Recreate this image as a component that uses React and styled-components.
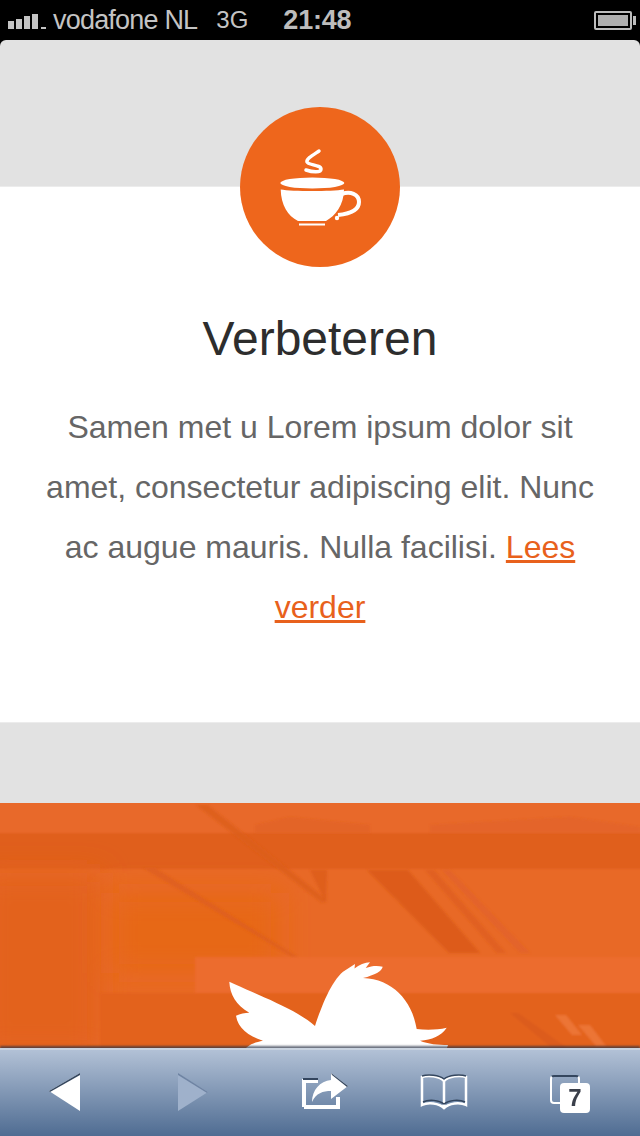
import React from "react";
import styled, { createGlobalStyle } from "styled-components";

const GlobalStyle = createGlobalStyle`
  html, body {
    margin: 0;
    padding: 0;
    background: #000;
  }
  body {
    font-family: "Liberation Sans", Arial, sans-serif;
  }
`;

function App() {
  return (
    <Phone>
      <GlobalStyle />
      <StatusBar>
        <SignalBars>
          {[8, 10, 13, 15].map((h) => (
            <Bar key={h} $height={h} />
          ))}
          <Dash />
        </SignalBars>
        <Carrier>vodafone NL</Carrier>
        <Network>3G</Network>
        <Clock>21:48</Clock>
        <Battery>
          <BatteryLevel />
        </Battery>
      </StatusBar>

      <Page>
        <TopBand />
        <Card>
          <Badge>
            <CupIcon />
          </Badge>
          <Title>Verbeteren</Title>
          <Text>
            Samen met u Lorem ipsum dolor sit amet, consectetur adipiscing
            elit. Nunc ac augue mauris. Nulla facilisi.{" "}
            <ReadMore href="#">Lees verder</ReadMore>
          </Text>
        </Card>
        <Spacer />
        <Banner>
          <BannerPhoto />
          <BirdIcon />
        </Banner>
      </Page>

      <Toolbar>
        <Tool $width={31} $left={0}>
          <svg width="31" height="38" viewBox="0 0 31 38">
            <path d="M31 0 L0 18 L31 38 Z" fill="#fff" />
            <path d="M31 0 L0 18 L1 19 L31 2 Z" fill="#34465e" />
          </svg>
        </Tool>
        <Tool $width={30} $left={98}>
          <svg width="30" height="38" viewBox="0 0 30 38">
            <path d="M0 0 L30 19 L0 38 Z" fill="#9fb1cb" />
            <path d="M0 0 L30 19 L29 20 L0 2 Z" fill="#6f84a3" />
          </svg>
        </Tool>
        <Tool $width={46} $left={94}>
          <ShareIcon />
        </Tool>
        <Tool $width={48} $left={72}>
          <BookIcon />
        </Tool>
        <Tool $width={40} $left={82}>
          <TabsBack />
          <TabsCount>7</TabsCount>
        </Tool>
      </Toolbar>
    </Phone>
  );
}

function CupIcon() {
  return (
    <svg width="84" height="80" viewBox="0 0 84 80">
      <g transform="translate(-278 -147)">
        <path
          d="M319 151 C313 155 306 159 307 162 C308 165 321 165 321 169 C321 173 312 172 306 170"
          fill="none"
          stroke="#fff"
          strokeWidth="3.5"
          strokeLinecap="round"
        />
        <ellipse cx="312.3" cy="183" rx="32" ry="5.5" fill="#fff" />
        <path
          d="M280.7 189.5 C292 191.5 332 191.5 344 189.5 C344 205 335 216 326 221 L298 221 C288 216 281 205 280.7 189.5 Z"
          fill="#fff"
        />
        <path
          d="M342 194 C350 191 359 194 359 202 C359 211 348 214 338 215"
          fill="none"
          stroke="#fff"
          strokeWidth="4"
        />
        <circle cx="337" cy="218" r="2.2" fill="#fff" />
        <rect x="299" y="223.5" width="26" height="2" fill="#fff" />
      </g>
    </svg>
  );
}

function BirdIcon() {
  return (
    <BirdSvg width="224" height="88" viewBox="227 960 224 88">
      <path
        fill="#fff"
        d="M229.3 981.7 C258 995 298 1010 315 1026 C322 1005 331 982 343 971.7 L355 964 L354.5 968.5 C359 965 365 962.5 370 962.3 L365.7 968 C372 965.5 378 965.5 382.7 966.7 C382 971 375 975 363 978 C392 979 412 1000 416.7 1029 C426 1030 437 1030 446.7 1027.7 C441 1036 432 1040 420 1040.7 C428 1044 438 1045 448 1045 L447 1048 L246 1048 C250 1044 256 1042 263 1040.7 C248 1036 238 1028 236 1015.7 C240 1013.5 245 1013 249.3 1012.7 C236 1005 230 995 229.3 981.7 Z"
      />
    </BirdSvg>
  );
}

function BannerPhoto() {
  return (
    <PhotoSvg viewBox="0 0 640 245" preserveAspectRatio="none">
      <defs>
        <filter id="soft" x="-5%" y="-5%" width="110%" height="110%">
          <feGaussianBlur stdDeviation="1.2" />
        </filter>
        <filter id="softer" x="-60%" y="-60%" width="220%" height="220%">
          <feGaussianBlur stdDeviation="14" />
        </filter>
      </defs>
      {/* big soft colour areas of the faded photo */}
      <g filter="url(#soft)">
        <rect x="-5" y="-5" width="650" height="35" fill="#e8692a" />
        <rect x="-5" y="30" width="650" height="36" fill="#e05f1d" />
        <rect x="-5" y="66" width="650" height="190" fill="#e86928" />
      </g>
      <rect x="-20" y="70" width="120" height="180" fill="#e3621a" filter="url(#softer)" />
      <rect x="110" y="90" width="170" height="80" fill="#e76714" filter="url(#softer)" />
      <g filter="url(#soft)">
        <rect x="195" y="154" width="450" height="36" fill="#ec6c2e" />
        <rect x="100" y="190" width="545" height="60" fill="#e3621f" />
        {/* roof beams */}
        <path d="M196 2 L208 2 L327 97 L322 100 Z" fill="#dc5e1d" opacity="0.8" />
        <path d="M310 67 L327 67 L326 100 Z" fill="#dc5d1b" opacity="0.8" />
        <path d="M143 65 L155 65 L298 154 L292 154 Z" fill="#dd5f1e" opacity="0.8" />
        {/* dark window frame with stripes */}
        <path d="M367 67 L408 67 L480 150 L449 150 Z" fill="#da5a18" opacity="0.85" />
        <path d="M425 67 L434 67 L506 150 L497 150 Z" fill="#de5f20" opacity="0.8" />
        <path d="M442 67 L450 67 L530 150 L520 150 Z" fill="#e2632a" opacity="0.8" />
        {/* clutter in the top band */}
        <path d="M255 22 L290 14 L370 22 L370 30 L255 30 Z" fill="#dd5e20" opacity="0.45" />
        <path d="M430 22 L570 14 L640 24 L640 30 L430 30 Z" fill="#e0602a" opacity="0.5" />
        {/* bottom right stripes */}
        <path d="M510 210 L518 210 L567 245 L552 245 Z" fill="#d95b1e" opacity="0.8" />
        <path d="M555 212 L566 212 L582 232 L572 232 Z" fill="#ee7a3c" opacity="0.8" />
        <path d="M578 222 L590 222 L606 243 L596 243 Z" fill="#ee7a3c" opacity="0.8" />
      </g>
    </PhotoSvg>
  );
}

function ShareIcon() {
  return (
    <svg width="46" height="38" viewBox="0 0 46 38">
      <path
        d="M2 34 V8 H16 M36 24 V34 H2"
        fill="none"
        stroke="#fff"
        strokeWidth="4"
      />
      <path d="M1 6 H16" stroke="#33455e" strokeWidth="2" />
      <path
        d="M29 0 L46 13 L29 26 V18 C21 18 14 20 10 29 C10 17 18 8 29 7 Z"
        fill="#fff"
      />
      <path d="M29 0 L46 13 L45 14 L30 2 Z" fill="#34465e" />
    </svg>
  );
}

function BookIcon() {
  return (
    <svg width="48" height="36" viewBox="0 0 48 36">
      <path
        d="M24 7 C19 2 8 1 2 3 V31 C8 28 19 29 24 34 C29 29 40 28 46 31 V3 C40 1 29 2 24 7 Z M24 7 V33"
        fill="none"
        stroke="#fff"
        strokeWidth="2.5"
      />
      <path
        d="M3 28 C9 25 19 26 24 30 C29 26 39 25 45 28 M2 2 C8 0 19 1 24 5 C29 1 40 0 46 2"
        fill="none"
        stroke="#34465e"
        strokeWidth="1.5"
      />
    </svg>
  );
}

const Phone = styled.div`
  width: 640px;
  height: 1136px;
  display: flex;
  flex-direction: column;
  overflow: hidden;
  background: #000;
`;

const StatusBar = styled.div`
  height: 40px;
  flex: none;
  display: flex;
  align-items: center;
  padding: 0 5px 0 8px;
  box-sizing: border-box;
  color: #c4c4c4;
`;

const SignalBars = styled.div`
  display: flex;
  align-items: flex-end;
  gap: 2px;
  width: 38px;
  height: 15px;
  margin-top: 2px;
  flex: none;
`;

const Bar = styled.span`
  width: 6px;
  flex: none;
  height: ${(p) => p.$height}px;
  background: #c4c4c4;
`;

const Dash = styled.span`
  width: 5px;
  flex: none;
  height: 2px;
  margin-left: 1px;
  background: #c4c4c4;
`;

const Carrier = styled.span`
  margin-left: 7px;
  font-size: 27px;
  letter-spacing: -0.8px;
`;

const Network = styled.span`
  margin-left: 19px;
  font-size: 24px;
`;

const Clock = styled.span`
  margin-left: 35px;
  font-size: 27px;
  font-weight: 700;
  color: #bdbdbd;
  letter-spacing: -0.2px;
`;

const Battery = styled.div`
  margin-left: auto;
  margin-right: 3px;
  box-sizing: border-box;
  width: 38px;
  height: 19px;
  padding: 2px;
  border: 2px solid #bdbdbd;
  border-radius: 2px;
  position: relative;
  &::after {
    content: "";
    position: absolute;
    right: -6px;
    top: 3px;
    width: 3px;
    height: 9px;
    background: #bdbdbd;
  }
`;

const BatteryLevel = styled.div`
  height: 100%;
  background: #b0b0b0;
`;

const Page = styled.main`
  flex: none;
  height: 1008px;
  display: flex;
  flex-direction: column;
  background: #e2e2e2;
  border-radius: 6px 6px 0 0;
  overflow: hidden;
`;

const TopBand = styled.div`
  height: 146px;
  flex: none;
`;

const Card = styled.section`
  flex: none;
  height: 537px;
  box-sizing: border-box;
  background: #fff;
  border-top: 1px solid #ececec;
  border-bottom: 1px solid #ececec;
  display: flex;
  flex-direction: column;
  align-items: center;
  padding: 0 40px;
`;

const Badge = styled.div`
  width: 160px;
  height: 160px;
  margin-top: -80px;
  flex: none;
  border-radius: 50%;
  background: #ee661c;
  display: flex;
  align-items: center;
  justify-content: center;
`;

const Title = styled.h1`
  margin: 44px 0 0;
  font-size: 48px;
  line-height: 56px;
  font-weight: 400;
  color: #2d2d2d;
`;

const Text = styled.p`
  margin: 30px 0 0;
  font-size: 32px;
  line-height: 60px;
  color: #666;
  text-align: center;
`;

const ReadMore = styled.a`
  color: #e8611c;
  text-decoration: underline;
`;

const Spacer = styled.div`
  height: 80px;
  flex: none;
`;

const Banner = styled.section`
  flex: none;
  height: 245px;
  position: relative;
  overflow: hidden;
  display: flex;
  justify-content: center;
  align-items: flex-end;
  background: #e3621a;
`;

const PhotoSvg = styled.svg`
  position: absolute;
  inset: 0;
  width: 100%;
  height: 100%;
`;

const BirdSvg = styled.svg`
  position: relative;
  left: 19px;
`;

const Toolbar = styled.nav`
  flex: none;
  height: 88px;
  box-sizing: border-box;
  display: flex;
  align-items: center;
  padding: 0 0 3px 49px;
  border-top: 2px solid #c9d3e0;
  box-shadow: 0 -2px 2px rgba(40, 50, 70, 0.7);
  background: linear-gradient(#b2c1d6, #4f6c92);
  position: relative;
`;

const Tool = styled.div`
  width: ${(p) => p.$width}px;
  height: 38px;
  margin-left: ${(p) => p.$left}px;
  flex: none;
  position: relative;
  display: flex;
  align-items: center;
`;

const TabsBack = styled.div`
  position: absolute;
  left: 0;
  top: 2px;
  width: 30px;
  height: 29px;
  box-sizing: border-box;
  border: 2px solid #fff;
  border-top-color: #34465e;
  border-radius: 4px;
`;

const TabsCount = styled.div`
  position: absolute;
  right: 0;
  top: 10px;
  width: 30px;
  height: 30px;
  border-radius: 4px;
  background: #fff;
  color: #3a3f4a;
  font-size: 24px;
  font-weight: 700;
  line-height: 30px;
  text-align: center;
`;

export default App;
